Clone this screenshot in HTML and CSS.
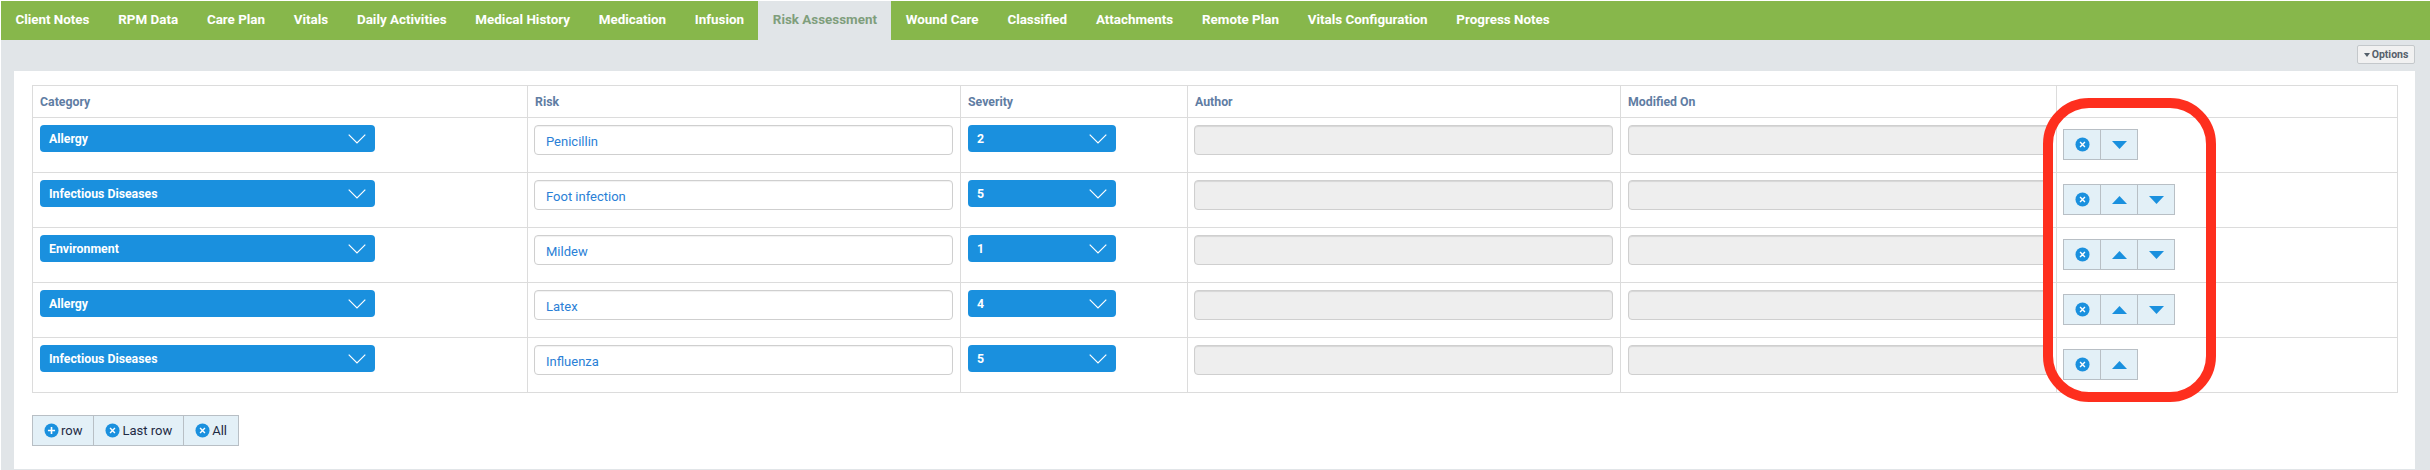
FILE: index.html
```html
<!DOCTYPE html>
<html lang="en">
<head>
<meta charset="utf-8">
<title>Risk Assessment</title>
<link rel="stylesheet" href="styles.css">
</head>
<body>
<svg class="defs" width="0" height="0" aria-hidden="true">
  <symbol id="i-x" viewBox="0 0 16 16"><circle cx="8" cy="8" r="7.5" fill="#1a90de"/><path d="M5.4 5.4l5.2 5.2M10.6 5.4l-5.2 5.2" stroke="#fff" stroke-width="1.5" fill="none"/></symbol>
  <symbol id="i-plus" viewBox="0 0 16 16"><circle cx="8" cy="8" r="7.5" fill="#1a90de"/><path d="M8 4.2v7.6M4.2 8h7.6" stroke="#fff" stroke-width="1.7" fill="none"/></symbol>
  <symbol id="i-up" viewBox="0 0 15 8"><path d="M7.5 0L15 8H0z" fill="#1a90de"/></symbol>
  <symbol id="i-down" viewBox="0 0 15 8"><path d="M0 0h15L7.5 8z" fill="#1a90de"/></symbol>
  <symbol id="i-chev" viewBox="0 0 18 10"><path d="M.7.7L9 9l8.3-8.3" stroke="#fff" stroke-width="1.2" fill="none"/></symbol>
</svg>
<div class="app">
  <nav class="tabs">
    <a class="tab">Client Notes</a><a class="tab">RPM Data</a><a class="tab">Care Plan</a><a class="tab">Vitals</a><a class="tab">Daily Activities</a><a class="tab">Medical History</a><a class="tab">Medication</a><a class="tab">Infusion</a><a class="tab active">Risk Assessment</a><a class="tab">Wound Care</a><a class="tab">Classified</a><a class="tab">Attachments</a><a class="tab">Remote Plan</a><a class="tab">Vitals Configuration</a><a class="tab">Progress Notes</a>
  </nav>
  <div class="toolbar"><button class="options"><span class="caret"></span>Options</button></div>
  <main class="panel">
    <table class="grid">
      <colgroup><col class="c-cat"><col class="c-risk"><col class="c-sev"><col class="c-auth"><col class="c-mod"><col class="c-act"></colgroup>
      <thead><tr><th>Category</th><th>Risk</th><th>Severity</th><th>Author</th><th>Modified On</th><th></th></tr></thead>
      <tbody>
        <tr>
          <td><div class="select cat"><span>Allergy</span><svg class="chev"><use href="#i-chev"/></svg></div></td>
          <td class="tight"><input class="field" value="Penicillin"></td>
          <td><div class="select sev"><span>2</span><svg class="chev"><use href="#i-chev"/></svg></div></td>
          <td class="tight"><input class="field off" disabled></td>
          <td><input class="field off wide" disabled></td>
          <td class="acts"><div class="btns"><button class="btn"><svg class="ico"><use href="#i-x"/></svg></button><button class="btn"><svg class="tri"><use href="#i-down"/></svg></button></div></td>
        </tr>
        <tr>
          <td><div class="select cat"><span>Infectious Diseases</span><svg class="chev"><use href="#i-chev"/></svg></div></td>
          <td class="tight"><input class="field" value="Foot infection"></td>
          <td><div class="select sev"><span>5</span><svg class="chev"><use href="#i-chev"/></svg></div></td>
          <td class="tight"><input class="field off" disabled></td>
          <td><input class="field off wide" disabled></td>
          <td class="acts"><div class="btns"><button class="btn"><svg class="ico"><use href="#i-x"/></svg></button><button class="btn"><svg class="tri"><use href="#i-up"/></svg></button><button class="btn"><svg class="tri"><use href="#i-down"/></svg></button></div></td>
        </tr>
        <tr>
          <td><div class="select cat"><span>Environment</span><svg class="chev"><use href="#i-chev"/></svg></div></td>
          <td class="tight"><input class="field" value="Mildew"></td>
          <td><div class="select sev"><span>1</span><svg class="chev"><use href="#i-chev"/></svg></div></td>
          <td class="tight"><input class="field off" disabled></td>
          <td><input class="field off wide" disabled></td>
          <td class="acts"><div class="btns"><button class="btn"><svg class="ico"><use href="#i-x"/></svg></button><button class="btn"><svg class="tri"><use href="#i-up"/></svg></button><button class="btn"><svg class="tri"><use href="#i-down"/></svg></button></div></td>
        </tr>
        <tr>
          <td><div class="select cat"><span>Allergy</span><svg class="chev"><use href="#i-chev"/></svg></div></td>
          <td class="tight"><input class="field" value="Latex"></td>
          <td><div class="select sev"><span>4</span><svg class="chev"><use href="#i-chev"/></svg></div></td>
          <td class="tight"><input class="field off" disabled></td>
          <td><input class="field off wide" disabled></td>
          <td class="acts"><div class="btns"><button class="btn"><svg class="ico"><use href="#i-x"/></svg></button><button class="btn"><svg class="tri"><use href="#i-up"/></svg></button><button class="btn"><svg class="tri"><use href="#i-down"/></svg></button></div></td>
        </tr>
        <tr>
          <td><div class="select cat"><span>Infectious Diseases</span><svg class="chev"><use href="#i-chev"/></svg></div></td>
          <td class="tight"><input class="field" value="Influenza"></td>
          <td><div class="select sev"><span>5</span><svg class="chev"><use href="#i-chev"/></svg></div></td>
          <td class="tight"><input class="field off" disabled></td>
          <td><input class="field off wide" disabled></td>
          <td class="acts"><div class="btns"><button class="btn"><svg class="ico"><use href="#i-x"/></svg></button><button class="btn"><svg class="tri"><use href="#i-up"/></svg></button></div></td>
        </tr>
      </tbody>
    </table>
    <div class="btns footer">
      <button class="btn text"><svg class="ico"><use href="#i-plus"/></svg>row</button><button class="btn text"><svg class="ico"><use href="#i-x"/></svg>Last row</button><button class="btn text"><svg class="ico"><use href="#i-x"/></svg>All</button>
    </div>
  </main>
</div>
<div class="annotation"></div>
</body>
</html>
```
FILE: styles.css
```css
* { box-sizing: border-box; }
html, body { margin: 0; height: 470px; overflow: hidden; background: #fff; }
body { padding: 1px 0 0 1px; font-family: Roboto, "Liberation Sans", sans-serif; position: relative; }
.defs { position: absolute; }
.app { height: 469px; background: #e1e5e8; }

.tabs { display: flex; height: 39px; background: #87b74b; }
.tab { padding: 0 14.4px; line-height: 38px; font-size: 13.4px; font-weight: 700; color: #fff; white-space: nowrap; }
.tab.active { background: #e1e5e8; color: #7f9e7c; }

.toolbar { display: flex; justify-content: flex-end; height: 31px; padding: 5px 15px 0 0; }
.options { width: 58px; height: 19px; padding: 0; border: 1px solid #c4c8cb; border-radius: 2px; background: #f1f1f1; color: #55606b; font: 700 10.5px Roboto, sans-serif; display: flex; align-items: center; justify-content: center; }
.caret { width: 0; height: 0; margin-right: 2px; border: 3px solid transparent; border-top: 4px solid #55606b; border-bottom: 0; }

.panel { height: 398px; margin: 0 15px 0 13px; padding: 14px 18px 0; background: #fff; }

.grid { width: 2365px; table-layout: fixed; border-collapse: collapse; }
.c-cat { width: 495px; } .c-risk { width: 433px; } .c-sev { width: 227px; } .c-auth { width: 433px; } .c-mod { width: 436px; } .c-act { width: 341px; }
.grid th, .grid td { border: 1px solid #dcdcdc; padding: 7px; vertical-align: top; text-align: left; }
.grid td.tight { padding-left: 6px; }
.grid th { height: 32px; padding: 0 7px; vertical-align: middle; font-size: 12.3px; font-weight: 700; color: #5f7da3; }
.grid td { height: 55px; }
.grid td.acts { padding: 11px 0 0 6px; }

.select { display: flex; align-items: center; justify-content: space-between; height: 27px; padding: 0 9px; border-radius: 4px; background: #1a90de; color: #fff; font-size: 12.3px; font-weight: 700; }
.select.cat { width: 335px; }
.select.sev { width: 148px; }
.chev { width: 18px; height: 10px; }

.field { display: block; width: 100%; height: 30px; padding: 2px 11px 0; border: 1px solid #cfcfcf; border-radius: 4px; background: #fff; color: #2a80d6; font: 400 13px Roboto, sans-serif; box-shadow: inset 0 1px 1px rgba(0,0,0,.06); }
.field.off { width: 419px; background: #eeeeee; box-shadow: inset 0 1px 1px rgba(0,0,0,.1); }
.field.off.wide { width: 423px; }

.btns { display: flex; }
.btn { display: flex; align-items: center; justify-content: center; width: 38px; height: 31px; padding: 0; margin-left: -1px; border: 1px solid #b8bfc5; background: #e3f0f7; color: #1e2a44; font: 400 13px Roboto, sans-serif; }
.btn:first-child { margin-left: 0; }
.ico { width: 15px; height: 15px; }
.tri { width: 15px; height: 8px; }
.footer { margin-top: 22px; }
.btn.text { width: auto; gap: 2px; padding: 0 11px; }

.annotation { position: absolute; left: 2043px; top: 98px; width: 173px; height: 304px; border: 10px solid #fe2f1e; border-radius: 46px; }
```
